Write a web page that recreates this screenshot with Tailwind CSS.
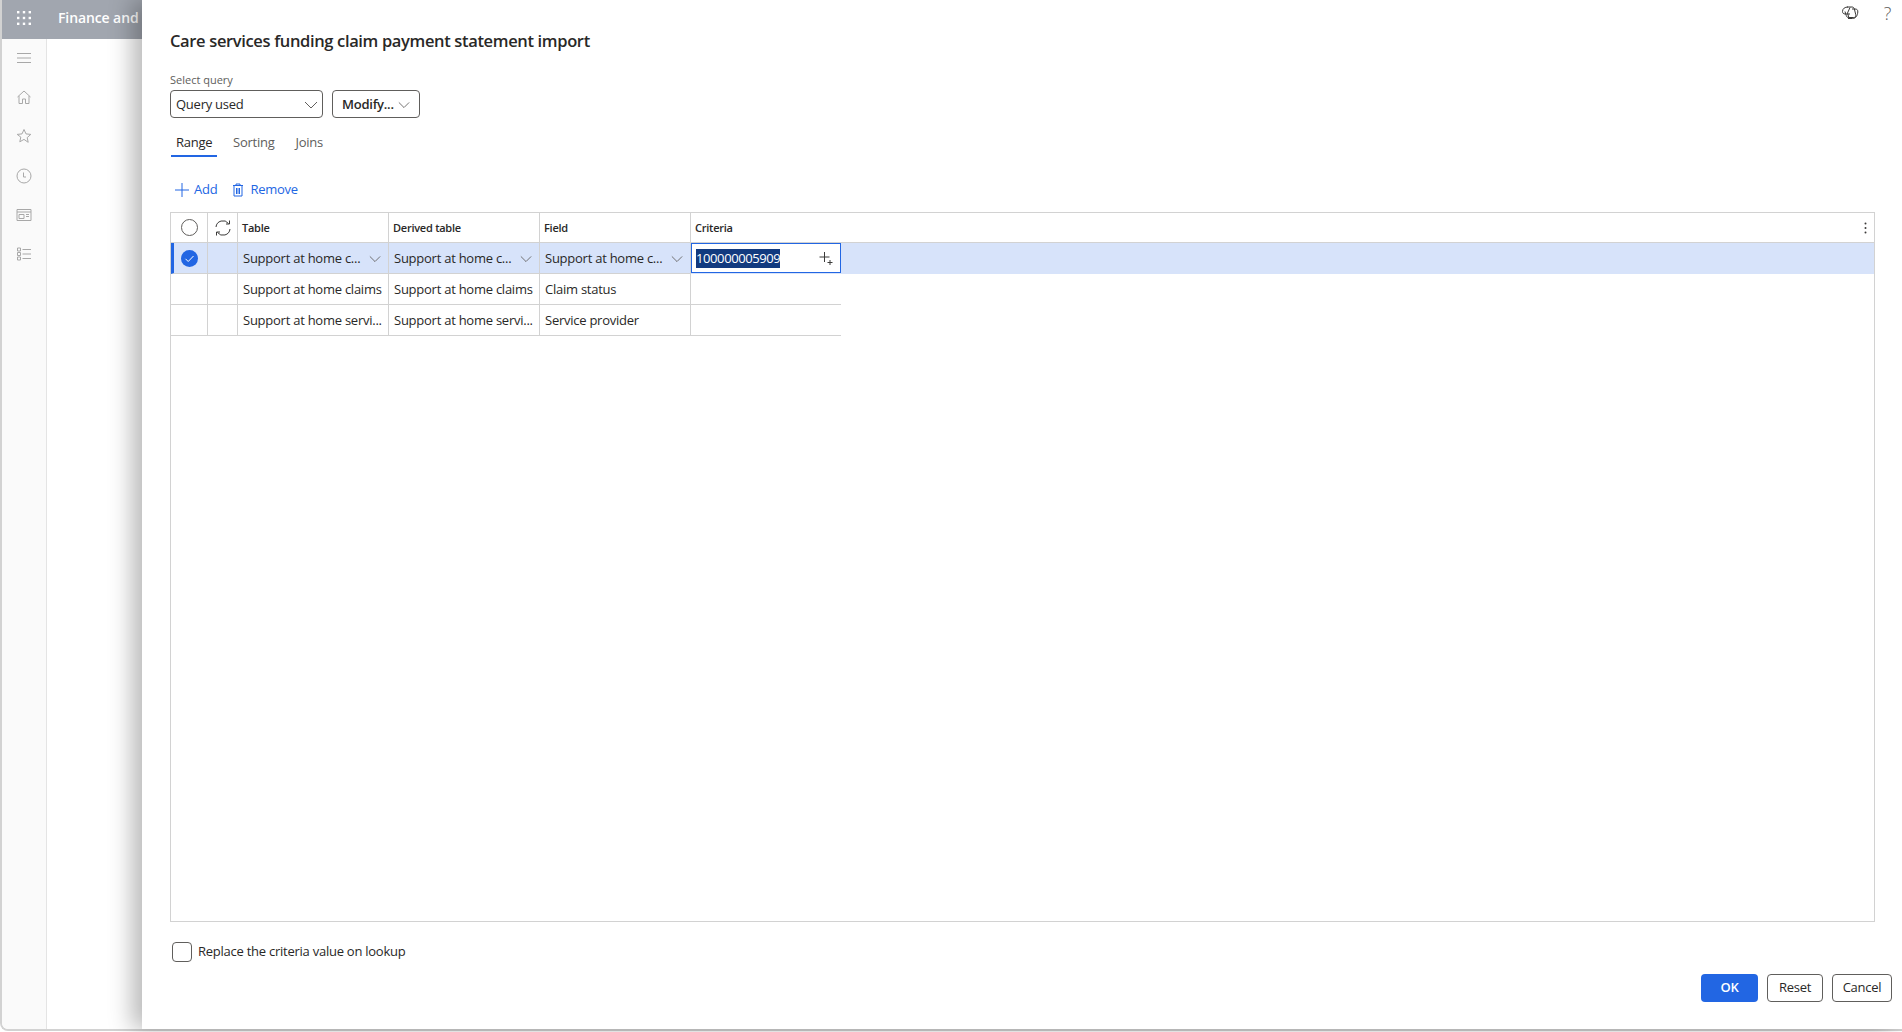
<!DOCTYPE html>
<html lang="en">
<head>
    <meta charset="UTF-8">
    <title>Care services funding claim payment statement import</title>
    <script src="https://cdn.jsdelivr.net/npm/@tailwindcss/browser@4"></script>
</head>
<body class="bg-white overflow-hidden font-['Open_Sans',sans-serif] text-[#292827]">
    <div class="relative w-[1902px] h-[1032px]">
        <!-- App shell behind the dialog -->
        <div class="h-[1031px] border-l-2 border-b-2 border-[#d2d2d2] rounded-bl-lg overflow-hidden">
            <div class="h-[39px] bg-[#a1a6af] flex items-center pb-[4px]">
                <svg class="ml-[14px] w-[16px] h-[16px] text-white" viewBox="0 0 16 16" fill="currentColor">
                    <rect x="1" y="1" width="2.4" height="2.4"/><rect x="6.8" y="1" width="2.4" height="2.4"/><rect x="12.6" y="1" width="2.4" height="2.4"/>
                    <rect x="1" y="6.8" width="2.4" height="2.4"/><rect x="6.8" y="6.8" width="2.4" height="2.4"/><rect x="12.6" y="6.8" width="2.4" height="2.4"/>
                    <rect x="1" y="12.6" width="2.4" height="2.4"/><rect x="6.8" y="12.6" width="2.4" height="2.4"/><rect x="12.6" y="12.6" width="2.4" height="2.4"/>
                </svg>
                <span class="ml-[26px] text-[14px] font-semibold text-white whitespace-nowrap tracking-[-0.1px]">Finance and</span>
            </div>
            <div class="flex h-[990px]">
                <div class="w-[45px] bg-[#fafafa] border-r border-[#e4e4e4] flex flex-col items-center pt-[11px] pr-[1px] gap-[23.2px] text-[#a8a8a8]">
                    <svg class="w-4 h-4 shrink-0" viewBox="0 0 16 16" fill="none" stroke="currentColor"><path d="M1 3.5h14M1 8h14M1 12.500h14"/></svg>
                    <svg class="w-4 h-4 shrink-0" viewBox="0 0 16 16" fill="none" stroke="currentColor"><path d="M1.500 8L8 2l6.500 6M3 7v7.500h3.500V10h3v4.500H13V7"/></svg>
                    <svg class="w-4 h-4 shrink-0" viewBox="0 0 16 16" fill="none" stroke="currentColor"><path d="M8 1.500l2 4.400 4.800.5-3.600 3.200 1 4.700L8 11.400 3.800 13.800l1-4.700L1.200 6.400l4.800-.5z"/></svg>
                    <svg class="w-4 h-4 shrink-0" viewBox="0 0 16 16" fill="none" stroke="currentColor"><circle cx="8" cy="8" r="7"/><path d="M7.500 4.500V9H10"/></svg>
                    <svg class="w-4 h-4 shrink-0" viewBox="0 0 16 16" fill="none" stroke="currentColor"><path d="M1 2.500h14v11H1zM1 5h14M3 7.500h5v4H3zM10 7.500h3M10 9.500h3"/></svg>
                    <svg class="w-4 h-4 shrink-0" viewBox="0 0 16 16" fill="none" stroke="currentColor"><path d="M1.500 2h3v3h-3zM1.500 6.500h3v3h-3zM1.500 11h3v3h-3zM6.500 3.500H15M6.500 8H15M6.500 12.500H15"/></svg>
                </div>
            </div>
        </div>

        <!-- Slide-in dialog -->
        <div class="absolute left-[142px] top-0 right-0 h-[1029px] bg-white shadow-[-10px_0_22px_rgba(0,0,0,0.28)] flex flex-col pl-[28px] pr-[27px] tracking-[-0.25px]">
            <h1 class="mt-[29px] h-[24px] leading-[24px] text-[16.5px] font-semibold tracking-[-0.35px]">Care services funding claim payment statement import</h1>

            <label class="mt-[20px] h-[14px] leading-[14px] text-[11px] text-[#605e5c] tracking-normal">Select query</label>
            <div class="mt-[3px] flex gap-[9px] h-[28px]">
                <div class="w-[153px] border border-[#605e5c] rounded-[4px] flex items-center justify-between pl-[5px] pr-[4px] pt-[1px] text-[13px]">
                    <span>Query used</span>
                    <svg class="w-[14px] h-[14px] text-[#605e5c]" viewBox="0 0 14 14" fill="none" stroke="currentColor"><path d="M1 4l6 6 6-6"/></svg>
                </div>
                <div class="w-[88px] border border-[#605e5c] rounded-[4px] flex items-center justify-between pl-[9px] pr-[9px] pt-[1px] text-[13px] font-semibold">
                    <span>Modify...</span>
                    <svg class="w-[12px] h-[12px] text-[#605e5c]" viewBox="0 0 14 14" fill="none" stroke="currentColor"><path d="M1 4l6 6 6-6"/></svg>
                </div>
            </div>

            <div class="mt-[12px] flex h-[27px] text-[13px] text-[#605e5c]">
                <div class="w-[46px] ml-[1px] pl-[5px] border-b-2 border-[#2266e3] text-[#292827] leading-[24px]">Range</div>
                <div class="ml-[16px] leading-[24px]">Sorting</div>
                <div class="ml-[21px] leading-[24px]">Joins</div>
            </div>

            <div class="mt-[20px] flex items-center h-[26px] text-[13px] text-[#2266e3]">
                <svg class="ml-[5px] w-[14px] h-[14px]" viewBox="0 0 14 14" fill="none" stroke="currentColor"><path d="M7 0v14M0 7h14"/></svg>
                <span class="ml-[5px]">Add</span>
                <svg class="ml-[15px] w-[12px] h-[14px]" viewBox="0 0 12 14" fill="none" stroke="currentColor"><path d="M1 2.500h10M4 2.500V1h4v1.500M2 2.500V13h8V2.500M4.500 5v6M6 5v6M7.500 5v6"/></svg>
                <span class="ml-[6px]">Remove</span>
            </div>

            <!-- Range grid -->
            <div class="mt-[9px] h-[710px] border border-[#d2d2d2] text-[13px]">
                <div class="grid grid-cols-[37px_30px_151px_151px_151px_150px_1fr] h-[30px] border-b border-[#d2d2d2] text-[11px] font-semibold items-stretch">
                    <div class="border-r border-[#d2d2d2] flex items-center justify-center">
                        <span class="w-[17px] h-[17px] rounded-full border border-[#605e5c]"></span>
                    </div>
                    <div class="border-r border-[#d2d2d2] flex items-center justify-center">
                        <svg class="w-[18px] h-[18px]" viewBox="0 0 18 18" fill="none" stroke="#3b3a39"><path d="M2 8a7 7 0 0 1 12.500-3.500M16 10a7 7 0 0 1-12.500 3.500M15.500 1.500v3.500H12M2.500 16.500V13H6"/></svg>
                    </div>
                    <div class="border-r border-[#d2d2d2] pl-[4px] pt-[1px] flex items-center">Table</div>
                    <div class="border-r border-[#d2d2d2] pl-[4px] pt-[1px] flex items-center">Derived table</div>
                    <div class="border-r border-[#d2d2d2] pl-[4px] pt-[1px] flex items-center">Field</div>
                    <div class="pl-[4px] pt-[1px] flex items-center">Criteria</div>
                    <div class="flex items-center justify-end pr-[7px]">
                        <svg class="w-[3px] h-[12px]" viewBox="0 0 3 12" fill="#3b3a39"><circle cx="1.500" cy="1.500" r="1"/><circle cx="1.500" cy="6" r="1"/><circle cx="1.500" cy="10.500" r="1"/></svg>
                    </div>
                </div>

                <div class="grid grid-cols-[37px_30px_151px_151px_151px_150px_1fr] h-[31px] bg-[#d7e3fa]">
                    <div class="border-r border-b border-[#d2d2d2] border-l-[3px] border-l-[#2266e3] flex items-center justify-center pr-[3px]">
                        <svg class="w-[17px] h-[17px]" viewBox="0 0 17 17"><circle cx="8.500" cy="8.500" r="8.500" fill="#2266e3"/><path d="M4.500 8.800l2.700 2.700 5.300-5.500" fill="none" stroke="white"/></svg>
                    </div>
                    <div class="border-r border-b border-[#d2d2d2]"></div>
                    <div class="border-r border-b border-[#d2d2d2] pl-[5px] pr-[7px] pt-[1px] flex items-center justify-between">
                        <span>Support at home c...</span>
                        <svg class="w-[12px] h-[12px] text-[#605e5c]" viewBox="0 0 14 14" fill="none" stroke="currentColor"><path d="M1 4l6 6 6-6"/></svg>
                    </div>
                    <div class="border-r border-b border-[#d2d2d2] pl-[5px] pr-[7px] pt-[1px] flex items-center justify-between">
                        <span>Support at home c...</span>
                        <svg class="w-[12px] h-[12px] text-[#605e5c]" viewBox="0 0 14 14" fill="none" stroke="currentColor"><path d="M1 4l6 6 6-6"/></svg>
                    </div>
                    <div class="border-r border-b border-[#d2d2d2] pl-[5px] pr-[7px] pt-[1px] flex items-center justify-between">
                        <span>Support at home c...</span>
                        <svg class="w-[12px] h-[12px] text-[#605e5c]" viewBox="0 0 14 14" fill="none" stroke="currentColor"><path d="M1 4l6 6 6-6"/></svg>
                    </div>
                    <div class="bg-white border border-[#2266e3] flex items-center justify-between pl-[4px] pr-[7px] h-[30px]">
                        <span class="bg-[#123a7f] text-white h-[19px] leading-[19px] tracking-[-0.4px]">100000005909</span>
                        <svg class="w-[14px] h-[14px]" viewBox="0 0 14 14" fill="none" stroke="#3b3a39"><path d="M5.500 1v10M0.500 6h10M11 9v5M8.500 11.500h5"/></svg>
                    </div>
                    <div></div>
                </div>

                <div class="grid grid-cols-[37px_30px_151px_151px_151px_150px] h-[31px]">
                    <div class="border-r border-b border-[#d2d2d2]"></div>
                    <div class="border-r border-b border-[#d2d2d2]"></div>
                    <div class="border-r border-b border-[#d2d2d2] pl-[5px] pt-[1px] flex items-center whitespace-nowrap">Support at home claims</div>
                    <div class="border-r border-b border-[#d2d2d2] pl-[5px] pt-[1px] flex items-center whitespace-nowrap">Support at home claims</div>
                    <div class="border-r border-b border-[#d2d2d2] pl-[5px] pt-[1px] flex items-center">Claim status</div>
                    <div class="border-b border-[#d2d2d2]"></div>
                </div>
                <div class="grid grid-cols-[37px_30px_151px_151px_151px_150px] h-[31px]">
                    <div class="border-r border-b border-[#d2d2d2]"></div>
                    <div class="border-r border-b border-[#d2d2d2]"></div>
                    <div class="border-r border-b border-[#d2d2d2] pl-[5px] pt-[1px] flex items-center whitespace-nowrap">Support at home servi...</div>
                    <div class="border-r border-b border-[#d2d2d2] pl-[5px] pt-[1px] flex items-center whitespace-nowrap">Support at home servi...</div>
                    <div class="border-r border-b border-[#d2d2d2] pl-[5px] pt-[1px] flex items-center">Service provider</div>
                    <div class="border-b border-[#d2d2d2]"></div>
                </div>
            </div>

            <div class="mt-[20px] ml-[2px] flex items-center h-[20px] text-[13px]">
                <span class="w-[20px] h-[20px] border border-[#605e5c] rounded-[4px]"></span>
                <span class="ml-[6px]">Replace the criteria value on lookup</span>
            </div>

            <div class="mt-[12px] -mr-[17px] flex justify-end gap-[9px] text-[13px]">
                <button class="w-[57px] h-[28px] rounded-[4px] bg-[#2266e3] text-white font-semibold">OK</button>
                <button class="w-[56px] h-[28px] rounded-[4px] border border-[#605e5c]">Reset</button>
                <button class="w-[60px] h-[28px] rounded-[4px] border border-[#605e5c]">Cancel</button>
            </div>

            <!-- Copilot and help -->
            <div class="absolute top-[4px] right-[11px] flex items-center gap-[25px] text-[#3b3a39]">
                <svg class="w-[18px] h-[18px]" viewBox="0 0 18 18" fill="none" stroke="currentColor"><path d="M6 3h5c1.300 0 2 .7 2.300 1.800l1.500 6c.4 1.700-.5 2.700-2 2.700H7.500c-1.200 0-1.900-.7-2.200-1.800L4 7.500M7 3C4 3 1.500 4.500 1.500 7.500c0 1.500 1 2.500 2.500 2.500h5M11 5h3c2 0 3 1 2.800 3-.3 3.500-1.800 6.500-5.300 6.500H7M9 3.500L6.500 9 8 14"/></svg>
                <span class="text-[18px] leading-[18px] font-light text-[#605e5c]">?</span>
            </div>
        </div>
    </div>
</body>
</html>
